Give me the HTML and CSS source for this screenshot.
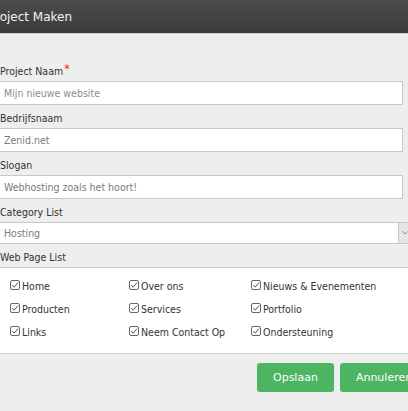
FILE: index.html
```html
<!DOCTYPE html>
<html>
<head>
<meta charset="utf-8">
<link rel="stylesheet" href="styles.css">
</head>
<body>
<div class="modal">
  <div class="modal-header"><h1 class="title">Project Maken</h1></div>
  <div class="modal-body">
    <div class="group">
      <label class="label">Project Naam<span class="req">*</span></label>
      <div class="input placeholder">Mijn nieuwe website</div>
    </div>
    <div class="group">
      <label class="label">Bedrijfsnaam</label>
      <div class="input">Zenid.net</div>
    </div>
    <div class="group">
      <label class="label">Slogan</label>
      <div class="input">Webhosting zoals het hoort!</div>
    </div>
    <div class="group">
      <label class="label">Category List</label>
      <div class="select">
        <span class="select-value">Hosting</span>
        <span class="select-arrow"><svg width="6" height="4" viewBox="0 0 6 4"><path d="M0.5 0.5 L3 3 L5.5 0.5" fill="none" stroke="#888" stroke-width="1"/></svg></span>
      </div>
    </div>
    <div class="group">
      <label class="label">Web Page List</label>
      <div class="checks">
        <div class="check"><svg class="box" viewBox="0 0 10 10"><rect x="0.5" y="0.5" width="9" height="9" rx="1.5" fill="#fff" stroke="#666"/><path d="M2.2 5 L4.2 7.2 L8 2.6" fill="none" stroke="#444" stroke-width="0.9"/></svg><span>Home</span></div>
        <div class="check"><svg class="box" viewBox="0 0 10 10"><rect x="0.5" y="0.5" width="9" height="9" rx="1.5" fill="#fff" stroke="#666"/><path d="M2.2 5 L4.2 7.2 L8 2.6" fill="none" stroke="#444" stroke-width="0.9"/></svg><span>Over ons</span></div>
        <div class="check"><svg class="box" viewBox="0 0 10 10"><rect x="0.5" y="0.5" width="9" height="9" rx="1.5" fill="#fff" stroke="#666"/><path d="M2.2 5 L4.2 7.2 L8 2.6" fill="none" stroke="#444" stroke-width="0.9"/></svg><span>Nieuws &amp; Evenementen</span></div>
        <div class="check"><svg class="box" viewBox="0 0 10 10"><rect x="0.5" y="0.5" width="9" height="9" rx="1.5" fill="#fff" stroke="#666"/><path d="M2.2 5 L4.2 7.2 L8 2.6" fill="none" stroke="#444" stroke-width="0.9"/></svg><span>Producten</span></div>
        <div class="check"><svg class="box" viewBox="0 0 10 10"><rect x="0.5" y="0.5" width="9" height="9" rx="1.5" fill="#fff" stroke="#666"/><path d="M2.2 5 L4.2 7.2 L8 2.6" fill="none" stroke="#444" stroke-width="0.9"/></svg><span>Services</span></div>
        <div class="check"><svg class="box" viewBox="0 0 10 10"><rect x="0.5" y="0.5" width="9" height="9" rx="1.5" fill="#fff" stroke="#666"/><path d="M2.2 5 L4.2 7.2 L8 2.6" fill="none" stroke="#444" stroke-width="0.9"/></svg><span>Portfolio</span></div>
        <div class="check"><svg class="box" viewBox="0 0 10 10"><rect x="0.5" y="0.5" width="9" height="9" rx="1.5" fill="#fff" stroke="#666"/><path d="M2.2 5 L4.2 7.2 L8 2.6" fill="none" stroke="#444" stroke-width="0.9"/></svg><span>Links</span></div>
        <div class="check"><svg class="box" viewBox="0 0 10 10"><rect x="0.5" y="0.5" width="9" height="9" rx="1.5" fill="#fff" stroke="#666"/><path d="M2.2 5 L4.2 7.2 L8 2.6" fill="none" stroke="#444" stroke-width="0.9"/></svg><span>Neem Contact Op</span></div>
        <div class="check"><svg class="box" viewBox="0 0 10 10"><rect x="0.5" y="0.5" width="9" height="9" rx="1.5" fill="#fff" stroke="#666"/><path d="M2.2 5 L4.2 7.2 L8 2.6" fill="none" stroke="#444" stroke-width="0.9"/></svg><span>Ondersteuning</span></div>
      </div>
    </div>
  </div>
  <div class="modal-footer">
    <button class="btn">Opslaan</button>
    <button class="btn">Annuleren</button>
  </div>
</div>
</body>
</html>
```

FILE: styles.css
```css
html, body {
  margin: 0;
  padding: 0;
  background: #eeeeee;
  overflow: hidden;
}
body {
  width: 408px;
  height: 411px;
  font-family: "DejaVu Sans Condensed", "DejaVu Sans", sans-serif;
  font-size: 10.5px;
  color: #333;
}
.modal {
  margin-left: -15px;
  width: 470px;
}
.modal-header {
  height: 33px;
  background: linear-gradient(#4b4b4b, #3c3c3c);
  border-bottom: 1px solid #cfcfcf;
  display: flex;
  align-items: center;
  padding-left: 3px;
}
.title {
  margin: 0;
  font-family: "DejaVu Sans", sans-serif;
  font-weight: normal;
  font-size: 12px;
  color: #f2f2f2;
  line-height: 14px;
  padding-top: 1px;
}
.modal-body {
  padding: 30px 0 0 14px;
}
.group {
  margin-bottom: 6px;
}
.label {
  display: block;
  line-height: 14px;
  margin-bottom: 3px;
  padding-left: 1px;
}
.req {
  color: #e52b2b;
  font-size: 12px;
  position: relative;
  top: -2px;
  margin-left: 1px;
}
.input {
  width: 394px;
  height: 22px;
  line-height: 22px;
  border: 1px solid #c8c8c8;
  background: #fff;
  padding: 0 4px;
  color: #7a7a7a;
}
.placeholder {
  color: #8c8c8c;
}
.select {
  display: flex;
  width: 420px;
  height: 20px;
  border: 1px solid #c8c8c8;
  background: #fff;
}
.select-value {
  flex: 1;
  padding-left: 4px;
  line-height: 20px;
  color: #7a7a7a;
}
.select-arrow {
  width: 18px;
  background: #e6e6e6;
  border-left: 1px solid #c8c8c8;
  display: flex;
  align-items: center;
  padding-left: 3px;
}
.checks {
  display: grid;
  grid-template-columns: 119px 122px 1fr;
  row-gap: 9px;
  background: #fff;
  border-top: 1px solid #cccccc;
  border-bottom: 1px solid #cccccc;
  padding: 11px 0 14px 12px;
  margin-left: -1px;
  margin-top: 0;
}
.check {
  display: flex;
  align-items: center;
  height: 14px;
  line-height: 14px;
  color: #333;
}
.box {
  width: 10px;
  height: 10px;
  margin-right: 2px;
  margin-top: -2px;
  flex: none;
}
.modal-footer {
  display: flex;
  gap: 6px;
  padding: 3px 0 0 272px;
}
.btn {
  font-family: "DejaVu Sans", sans-serif;
  font-size: 11px;
  color: #fff;
  background: #4db562;
  border: none;
  border-radius: 3px;
  height: 29px;
  padding: 0 16px;
  line-height: 29px;
}
```
